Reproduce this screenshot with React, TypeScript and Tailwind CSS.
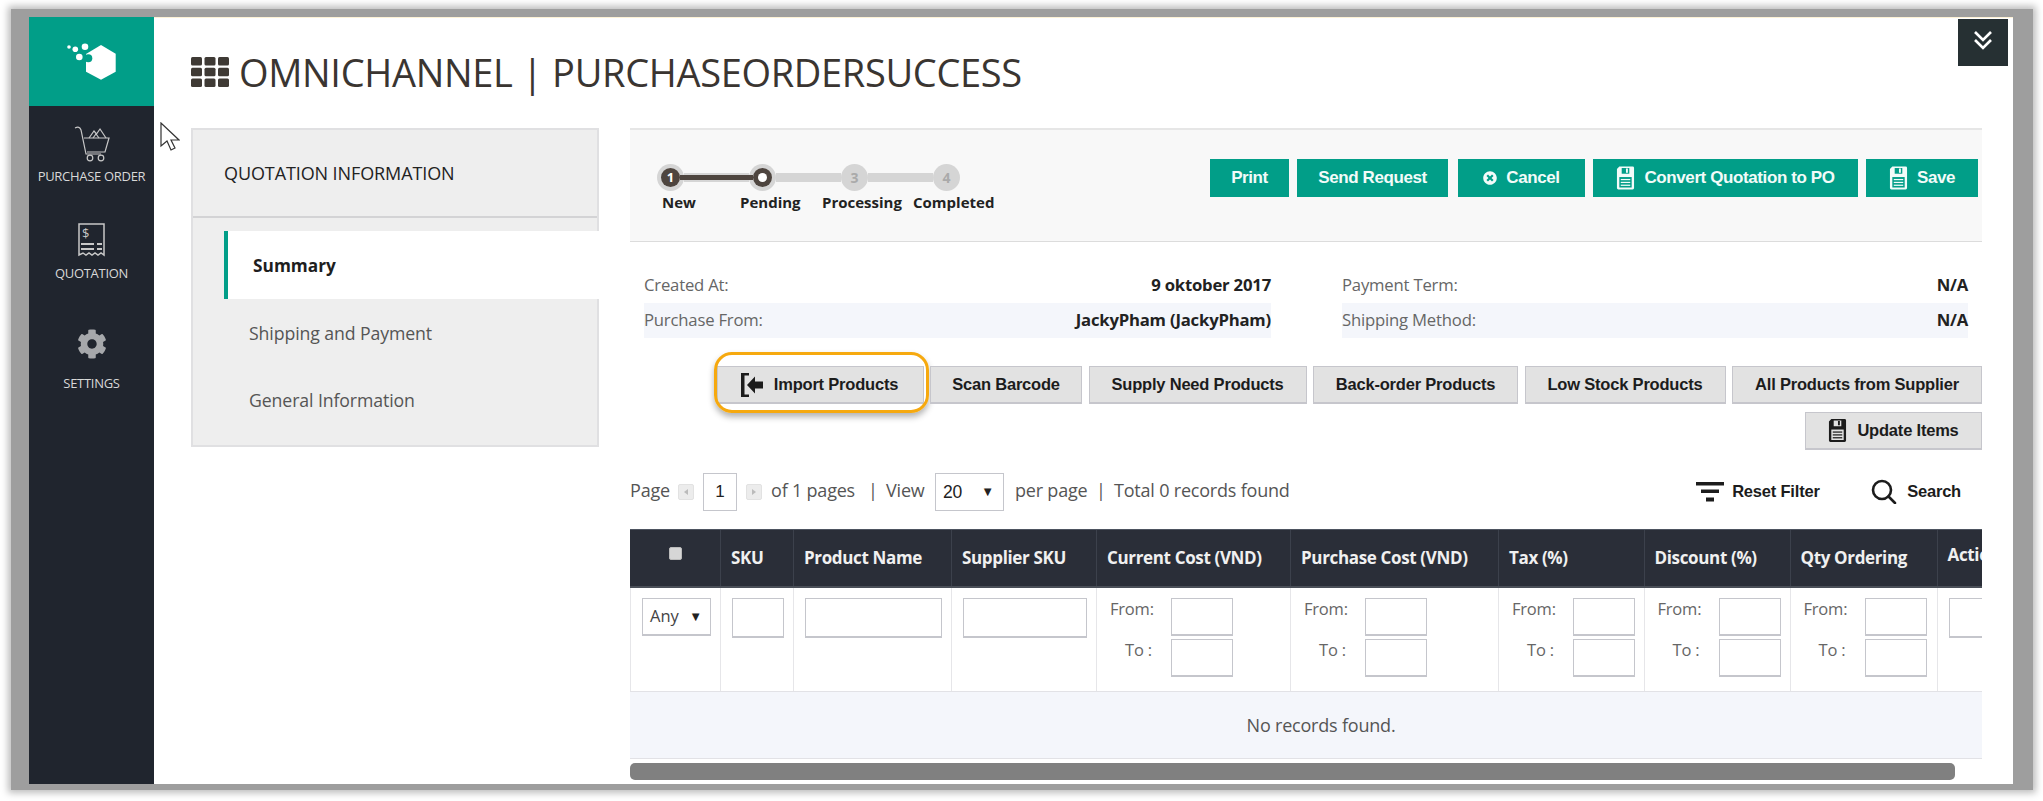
import React from "react";
import { FaCog, FaTimesCircle } from "react-icons/fa";

const OS = "font-['Open_Sans',sans-serif]";
const AR = "font-['Liberation_Sans',Arial,sans-serif]";
const COLS = "grid grid-cols-[91px_73px_158px_145px_194px_208px_145.5px_146px_147px_122px]";

function SaveIcon({ className }: { className?: string }) {
  return (
    <svg viewBox="0 0 20 26" className={className} fill="currentColor">
      <path d="M1 3.5 3.5 1H17.5a1.5 1.5 0 0 1 1.5 1.5v21a1.5 1.5 0 0 1-1.5 1.5h-15A1.5 1.5 0 0 1 1 23.500Z" />
      <rect x="6" y="2.500" width="8" height="6" fill="var(--ic)" />
      <rect x="10.500" y="3" width="2" height="4.500" fill="currentColor" />
      <rect x="3.500" y="12" width="13" height="11" fill="var(--ic)" />
      <rect x="5" y="14" width="10" height="1.300" fill="currentColor" />
      <rect x="5" y="17" width="10" height="1.300" fill="currentColor" />
      <rect x="5" y="20" width="10" height="1.300" fill="currentColor" />
    </svg>
  );
}

function TealButton({ w, children }: { w: string; children: React.ReactNode }) {
  return (
    <div className={`${w} h-[38px] bg-[#019e88] text-[#f2fbf9] ${AR} font-bold text-[17px] tracking-[-0.4px] flex items-center justify-center gap-[9px] [--ic:#019e88]`}>
      {children}
    </div>
  );
}

function GrayButton({ w, children }: { w: string; children: React.ReactNode }) {
  return (
    <div className={`${w} h-[38px] bg-[#e2e2e2] border border-[#c6c6cc] border-b-2 text-[#1c1c1c] ${AR} font-bold text-[16.500px] tracking-[-0.2px] flex items-center justify-center gap-[10px] relative`}>
      {children}
    </div>
  );
}

function Box({ className }: { className: string }) {
  return <input aria-label="filter" className={`${className} block bg-white border border-[#c5c6cc] border-b-2`} />;
}

function Range() {
  return (
    <div className="h-full border-r border-[#e6e6e9] pl-[13px] pt-[10px]">
      <div className="grid grid-cols-[61px_62px] gap-y-[3px] items-start text-[#666] text-[16.500px] leading-[22px] tracking-[-0.2px]">
        <span>From:</span>
        <Box className="w-[62px] h-[38px]" />
        <span className="pl-[15px]">To :</span>
        <Box className="w-[62px] h-[38px]" />
      </div>
    </div>
  );
}

function Step({ state, n }: { state: "on" | "now" | "off"; n: number }) {
  return (
    <div className="w-[27px] h-[27px] rounded-full bg-[#d5d5d5] flex items-center justify-center shrink-0 relative z-10">
      {state === "on" && (
        <div className="w-[19px] h-[19px] rounded-full bg-[#4e453f] text-white text-[13px] font-bold flex items-center justify-center">{n}</div>
      )}
      {state === "now" && (
        <div className="w-[19px] h-[19px] rounded-full bg-[#4e453f] flex items-center justify-center">
          <div className="w-[9px] h-[9px] rounded-full bg-white" />
        </div>
      )}
      {state === "off" && <span className="text-[#aaa] text-[14px] font-bold">{n}</span>}
    </div>
  );
}

function Bar({ dark }: { dark?: boolean }) {
  return (
    <div className="w-[65px] h-[9px] bg-[#d5d5d5] flex items-center shrink-0 relative z-20">
      {dark && <div className="h-[5px] bg-[#4e453f] -mx-[4px] grow" />}
    </div>
  );
}

export default function App() {
  return (
    <div className={`w-[2043px] h-[801px] bg-white pt-[9px] pl-[11px] overflow-hidden ${OS}`}>
      <div className="w-[2022px] h-[781px] border-solid border-t-[8px] border-l-[18px] border-r-[20px] border-b-[6px] border-[#9e9e9e] shadow-[0_0_7px_3px_#bdbdbd]">
        <div className="w-full h-full bg-white flex relative">
          {/* sidebar */}
          <aside className="w-[125px] shrink-0 bg-[#20252e] text-[#d8d8d8] text-[13px] tracking-[-0.3px] text-center">
            <div className="h-[89px] bg-[#019e88] flex items-center justify-center">
              <svg viewBox="0 0 56 40" className="w-[56px] h-[40px]" fill="white">
                <polygon points="37,3 51.700,11.700 51.700,29.700 37,37.700 22,29.700 22,12" />
                <circle cx="24.300" cy="16.300" r="4" fill="#019e88" />
                <circle cx="5" cy="5" r="1.800" />
                <circle cx="11.300" cy="7.300" r="2.800" />
                <circle cx="21" cy="4.700" r="3.300" />
                <circle cx="15.300" cy="15" r="3.300" />
              </svg>
            </div>
            <div className="pt-[20px] h-[100px] flex flex-col items-center">
              <svg viewBox="0 0 36 36" className="w-[36px] h-[36px]" fill="none" stroke="#c8c8c8" strokeWidth="1.200">
                <path d="M1 2c3-1.500 5-1 6 2l5 24h15" />
                <path d="M10 12h25l-4 14H13" />
                <circle cx="16" cy="32" r="2.800" />
                <circle cx="27" cy="32" r="2.800" />
                <path d="M15 12l5-7 2.500 3L26 3l6 9" />
                <path d="M19 12l3-4 3 4" />
              </svg>
              <div className="mt-[5px] leading-[18px]">PURCHASE ORDER</div>
            </div>
            <div className="pt-[17px] h-[107px] flex flex-col items-center">
              <svg viewBox="0 0 27 35" className="w-[27px] h-[35px]" fill="none" stroke="#c8c8c8" strokeWidth="1.500">
                <path d="M1 1h25v31l-3-2-3 2-3-2-3 2-3-2-3 2-3-2-4 2Z" />
                <path d="M3 21h13M19 21h5M3 26h13M19 26h5" strokeWidth="2" />
                <text x="4" y="15" fontSize="13" fill="#c8c8c8" stroke="none">$</text>
              </svg>
              <div className="mt-[6px] leading-[18px]">QUOTATION</div>
            </div>
            <div className="pt-[16px] flex flex-col items-center">
              <FaCog className="w-[30px] h-[30px] text-[#a6a8ab]" />
              <div className="mt-[15px] leading-[18px]">SETTINGS</div>
            </div>
          </aside>

          {/* main */}
          <main className="flex-1 min-w-0 pl-[37px] pr-[31px] border-t border-t-[#fdf2d6]">
            <h1 className="h-[110px] flex items-center gap-[10px] text-[#3a3531] text-[38px] tracking-[-0.33px] font-normal pb-[2px]">
              <svg viewBox="0 0 38 30" className="w-[38px] h-[30px] text-[#3f3a35]" fill="currentColor">
                <rect x="0" y="0" width="11" height="8.500" rx="1.500" />
                <rect x="13.500" y="0" width="11" height="8.500" rx="1.500" />
                <rect x="27" y="0" width="11" height="8.500" rx="1.500" />
                <rect x="0" y="10.750" width="11" height="8.500" rx="1.500" />
                <rect x="13.500" y="10.750" width="11" height="8.500" rx="1.500" />
                <rect x="27" y="10.750" width="11" height="8.500" rx="1.500" />
                <rect x="0" y="21.500" width="11" height="8.500" rx="1.500" />
                <rect x="13.500" y="21.500" width="11" height="8.500" rx="1.500" />
                <rect x="27" y="21.500" width="11" height="8.500" rx="1.500" />
              </svg>
              <span>OMNICHANNEL | PURCHASEORDERSUCCESS</span>
            </h1>
            <div className="flex gap-[31px]">
              {/* left panel */}
              <div className="w-[408px] h-[319px] shrink-0 bg-[#eeeeee] border-2 border-[#e0e0e2] text-[#444]">
                <div className="h-[88px] border-b-2 border-[#d3d3d5] flex items-center pl-[31px] text-[#222] text-[18px] font-medium tracking-[-0.1px]">
                  QUOTATION INFORMATION
                </div>
                <div className="pl-[31px] pt-[13px]">
                  <div className="h-[68px] -mr-[2px] pt-[1px] bg-white border-l-[4px] border-[#019e88] flex items-center pl-[25px] text-[#1e1e1e] font-bold text-[17.300px]">
                    Summary
                  </div>
                  <div className="h-[68px] flex items-center pl-[25px] text-[#555] text-[17.700px] tracking-[-0.1px]">Shipping and Payment</div>
                  <div className="h-[67px] flex items-center pl-[25px] text-[#555] text-[17.700px] tracking-[-0.1px]">General Information</div>
                </div>
              </div>

              {/* right column */}
              <div className="flex-1 min-w-0 overflow-hidden">
                <div className="h-[114px] bg-[#f8f8f8] border-t-2 border-t-[#e6e6e6] border-b border-b-[#dcdcdc] flex justify-between pl-[27px] pr-[4px]">
                  <div className="pt-[34px]">
                    <div className="flex items-center">
                      <Step state="on" n={1} />
                      <Bar dark />
                      <Step state="now" n={2} />
                      <Bar />
                      <Step state="off" n={3} />
                      <Bar />
                      <Step state="off" n={4} />
                    </div>
                    <div className="flex text-[#222] text-[15px] font-bold leading-[20px] mt-[1px] ml-[5px]">
                      <span className="w-[78px]">New</span>
                      <span className="w-[82px]">Pending</span>
                      <span className="w-[91px]">Processing</span>
                      <span>Completed</span>
                    </div>
                  </div>
                  <div className="pt-[29px] flex gap-[8px]">
                    <TealButton w="w-[79px]">Print</TealButton>
                    <TealButton w="w-[151px]">Send Request</TealButton>
                    <TealButton w="w-[127px] ml-[2px]"><FaTimesCircle className="w-[14px] h-[14px]" />Cancel</TealButton>
                    <TealButton w="w-[265px]"><SaveIcon className="w-[19px] h-[26px]" />Convert Quotation to PO</TealButton>
                    <TealButton w="w-[112px]"><SaveIcon className="w-[19px] h-[26px]" />Save</TealButton>
                  </div>
                </div>

                {/* info */}
                <div className="flex pl-[14px] pt-[26px] text-[16.700px] tracking-[-0.2px] [&_.r]:pb-[2px]">
                  <div className="w-[627px]">
                    <div className="r h-[35px] flex justify-between items-center text-[#666]"><span>Created At:</span><b className="text-[#222] font-bold">9 oktober 2017</b></div>
                    <div className="r h-[35px] flex justify-between items-center text-[#666] bg-[#f4f6fb]"><span>Purchase From:</span><b className="text-[#222] font-bold">JackyPham (JackyPham)</b></div>
                  </div>
                  <div className="w-[626px] ml-[71px]">
                    <div className="r h-[35px] flex justify-between items-center text-[#666]"><span>Payment Term:</span><b className="text-[#222] font-bold">N/A</b></div>
                    <div className="r h-[35px] flex justify-between items-center text-[#666] bg-[#f4f6fb]"><span>Shipping Method:</span><b className="text-[#222] font-bold">N/A</b></div>
                  </div>
                </div>

                {/* action buttons */}
                <div className="flex justify-end gap-[6.500px] mt-[28px]">
                  <GrayButton w="w-[207px]">
                    <svg viewBox="0 0 24 26" className="w-[24px] h-[26px] -ml-[2px] text-[#1c1c1c]" fill="currentColor">
                      <path d="M1 1h8v2.500H4.500v19H9V25H1Z" />
                      <path d="M23 9.500H15V4.500L7 13l8 8.500v-5h8Z" />
                    </svg>
                    Import Products
                    <div className="absolute -left-[4px] -right-[6px] -top-[15px] -bottom-[11px] rounded-[18px] border-[3px] border-[#f6a90f] shadow-[0_4px_6px_rgba(0,0,0,0.3)] pointer-events-none" />
                  </GrayButton>
                  <GrayButton w="w-[152px]">Scan Barcode</GrayButton>
                  <GrayButton w="w-[218px]">Supply Need Products</GrayButton>
                  <GrayButton w="w-[205px]">Back-order Products</GrayButton>
                  <GrayButton w="w-[201px]">Low Stock Products</GrayButton>
                  <GrayButton w="w-[250px]">All Products from Supplier</GrayButton>
                </div>
                <div className="flex justify-end mt-[8px]">
                  <GrayButton w="w-[177px] [--ic:#e2e2e2]"><SaveIcon className="w-[19px] h-[25px]" />Update Items</GrayButton>
                </div>

                {/* pagination */}
                <div className="h-[38px] mt-[23px] flex items-center text-[#555] text-[18px] tracking-[-0.2px] [&>.t]:pb-[3px]">
                  <span className="t w-[48px]">Page</span>
                  <div className="w-[16px] h-[16px] bg-[#ececec] border border-[#e2e2e2] rounded-[2px] flex items-center justify-center"><div className="border-y-[3px] border-y-transparent border-r-[4px] border-r-[#bbb]" /></div>
                  <div className={`w-[34px] h-[38px] ml-[9px] border border-[#c5c6cc] flex items-center justify-center text-[#222] text-[17px] ${AR}`}>1</div>
                  <div className="w-[16px] h-[16px] ml-[9px] bg-[#ececec] border border-[#e2e2e2] rounded-[2px] flex items-center justify-center"><div className="border-y-[3px] border-y-transparent border-l-[4px] border-l-[#bbb]" /></div>
                  <span className="t ml-[9px] w-[97px]">of 1 pages</span>
                  <span className="t w-[18px]">|</span>
                  <span className="t w-[49px]">View</span>
                  <div className={`w-[69px] h-[38px] border border-[#c5c6cc] flex items-center justify-between pl-[7px] pr-[9px] text-[#222] text-[17.500px] ${AR}`}><span>20</span><span className="text-[13px]">▼</span></div>
                  <span className="t ml-[11px] w-[81px]">per page</span>
                  <span className="t w-[18px]">|</span>
                  <span className="t">Total 0 records found</span>
                  <span className={`ml-auto flex items-center text-[#1c1c1c] font-bold text-[16.500px] tracking-[-0.2px] pb-[1px] ${AR}`}>
                    <svg viewBox="0 0 28 20" className="w-[28px] h-[20px] mr-[8px]" fill="currentColor">
                      <rect x="0" y="0" width="28" height="3.500" />
                      <rect x="5" y="7.500" width="18" height="3.500" />
                      <rect x="10" y="15.500" width="8" height="4" />
                    </svg>
                    <span className="w-[139px]">Reset Filter</span>
                    <svg viewBox="0 0 26 25" className="w-[26px] h-[25px] mr-[10px]" fill="none" stroke="currentColor" strokeWidth="2.600">
                      <circle cx="11" cy="11" r="9" />
                      <path d="M17.500 17.500 24 24" strokeLinecap="round" />
                    </svg>
                    <span className="mr-[21px]">Search</span>
                  </span>
                </div>

                {/* table */}
                <div className="mt-[18px] overflow-hidden">
                  <div className={`${COLS} h-[59px] bg-[#2a2e38] border-t border-[#4d5460] border-b-2 border-b-[#4a4f58] text-[#f0f0f0] font-bold text-[17px] tracking-[-0.35px] [&>div]:border-r [&>div]:border-[#3c414c] [&>div]:flex [&>div]:items-center [&>div]:pl-[10px]`}>
                    <div className="!pl-0 justify-center pb-[10px]"><div className="w-[13px] h-[13px] bg-[#d6d6d6] rounded-[2px] border border-[#bbb]" /></div>
                    <div>SKU</div>
                    <div>Product Name</div>
                    <div>Supplier SKU</div>
                    <div>Current Cost (VND)</div>
                    <div>Purchase Cost (VND)</div>
                    <div>Tax (%)</div>
                    <div>Discount (%)</div>
                    <div>Qty Ordering</div>
                    <div className="pb-[6px]">Action</div>
                  </div>
                  <div className={`${COLS} h-[104px] border-b border-[#e2e2e6]`}>
                    <div className="border-r border-l border-[#e6e6e9] pl-[11px] pt-[10px]">
                      <div className="w-[69px] h-[38px] bg-white border border-[#c5c6cc] border-b-2 flex items-center justify-between pl-[7px] pr-[8px] text-[#444] text-[16.500px]"><span>Any</span><span className="text-[13px] text-[#222]">▼</span></div>
                    </div>
                    <div className="border-r border-[#e6e6e9] pl-[11px] pt-[10px]"><Box className="w-[52px] h-[40px]" /></div>
                    <div className="border-r border-[#e6e6e9] pl-[11px] pt-[10px]"><Box className="w-[137px] h-[40px]" /></div>
                    <div className="border-r border-[#e6e6e9] pl-[11px] pt-[10px]"><Box className="w-[124px] h-[40px]" /></div>
                    <Range />
                    <Range />
                    <Range />
                    <Range />
                    <Range />
                    <div className="pl-[11px] pt-[10px]"><Box className="w-[80px] h-[40px]" /></div>
                  </div>
                  <div className="h-[67px] pl-[30px] bg-[#f4f6fb] border-b border-[#e2e2e6] flex items-center justify-center text-[#555] text-[18px] tracking-[-0.2px]">No records found.</div>
                  <div className="mt-[4px] w-[1325px] h-[17px] bg-[#808080] rounded-[5px]" />
                </div>
              </div>
            </div>
          </main>

          {/* overlays */}
          <div className="absolute left-[1929px] top-[2px] w-[50px] h-[47px] bg-[#263033] flex items-center justify-center pb-[6px]">
            <svg viewBox="0 0 20 20" className="w-[20px] h-[20px]" fill="none" stroke="white" strokeWidth="2.600">
              <path d="M2 2l8 8 8-8M2 10l8 8 8-8" />
            </svg>
          </div>
          <svg viewBox="0 0 20 29" className="absolute left-[131px] top-[105px] w-[20px] h-[29px]" fill="white" stroke="#333" strokeWidth="1.200">
            <path d="M1 1v23l6-5 4 9 4-2-4-8h8Z" />
          </svg>
        </div>
      </div>
    </div>
  );
}
